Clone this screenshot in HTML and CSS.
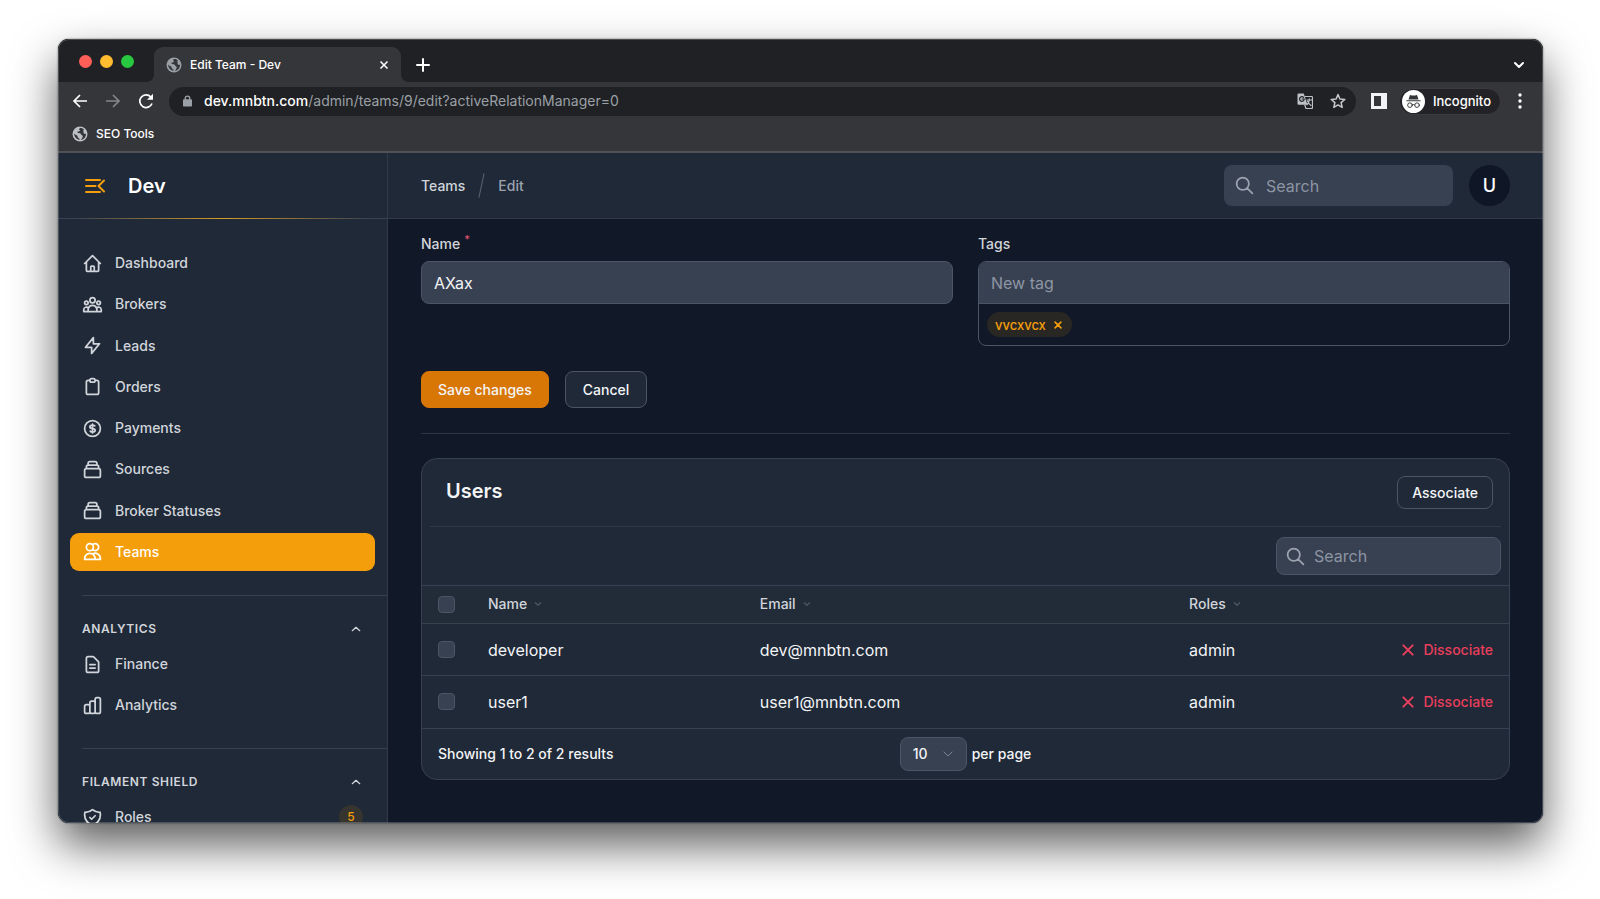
FILE: index.html
```html
<!DOCTYPE html>
<html lang="en">
<head>
<meta charset="utf-8">
<title>Edit Team - Dev</title>
<link rel="stylesheet" href="styles.css">
</head>
<body>
<svg class="defs" aria-hidden="true">
  <symbol id="i-home" viewBox="0 0 24 24"><path d="M3 12l2-2m0 0l7-7 7 7M5 10v10a1 1 0 001 1h3m10-11l2 2m-2-2v10a1 1 0 01-1 1h-3m-6 0a1 1 0 001-1v-4a1 1 0 011-1h2a1 1 0 011 1v4a1 1 0 001 1m-6 0h6"/></symbol>
  <symbol id="i-group" viewBox="0 0 24 24"><path d="M17 20h5v-2a3 3 0 00-5.356-1.857M17 20H7m10 0v-2c0-.656-.126-1.283-.356-1.857M7 20H2v-2a3 3 0 015.356-1.857M7 20v-2c0-.656.126-1.283.356-1.857m0 0a5.002 5.002 0 019.288 0M15 7a3 3 0 11-6 0 3 3 0 016 0zm6 3a2 2 0 11-4 0 2 2 0 014 0zM7 10a2 2 0 11-4 0 2 2 0 014 0z"/></symbol>
  <symbol id="i-bolt" viewBox="0 0 24 24"><path d="M13 10V3L4 14h7v7l9-11h-7z"/></symbol>
  <symbol id="i-clipboard" viewBox="0 0 24 24"><path d="M9 5H7a2 2 0 00-2 2v12a2 2 0 002 2h10a2 2 0 002-2V7a2 2 0 00-2-2h-2M9 5a2 2 0 002 2h2a2 2 0 002-2M9 5a2 2 0 012-2h2a2 2 0 012 2"/></symbol>
  <symbol id="i-dollar" viewBox="0 0 24 24"><path d="M12 8c-1.657 0-3 .895-3 2s1.343 2 3 2 3 .895 3 2-1.343 2-3 2m0-8c1.11 0 2.08.402 2.599 1M12 8V7m0 1v8m0 0v1m0-1c-1.11 0-2.08-.402-2.599-1M21 12a9 9 0 11-18 0 9 9 0 0118 0z"/></symbol>
  <symbol id="i-collection" viewBox="0 0 24 24"><path d="M19 11H5m14 0a2 2 0 012 2v6a2 2 0 01-2 2H5a2 2 0 01-2-2v-6a2 2 0 012-2m14 0V9a2 2 0 00-2-2M5 11V9a2 2 0 012-2m0 0V5a2 2 0 012-2h6a2 2 0 012 2v2M7 7h10"/></symbol>
  <symbol id="i-users" viewBox="0 0 24 24"><path d="M12 4.354a4 4 0 110 5.292M15 21H3v-1a6 6 0 0112 0v1zm0 0h6v-1a6 6 0 00-9-5.197M13 7a4 4 0 11-8 0 4 4 0 018 0z"/></symbol>
  <symbol id="i-document" viewBox="0 0 24 24"><path d="M9 12h6m-6 4h6m2 5H7a2 2 0 01-2-2V5a2 2 0 012-2h5.586a1 1 0 01.707.293l5.414 5.414a1 1 0 01.293.707V19a2 2 0 01-2 2z"/></symbol>
  <symbol id="i-chart" viewBox="0 0 24 24"><path d="M9 19v-6a2 2 0 00-2-2H5a2 2 0 00-2 2v6a2 2 0 002 2h2a2 2 0 002-2zm0 0V9a2 2 0 012-2h2a2 2 0 012 2v10m-6 0a2 2 0 002 2h2a2 2 0 002-2m0 0V5a2 2 0 012-2h2a2 2 0 012 2v14a2 2 0 01-2 2h-2a2 2 0 01-2-2z"/></symbol>
  <symbol id="i-shield" viewBox="0 0 24 24"><path d="M9 12l2 2 4-4m5.618-4.016A11.955 11.955 0 0112 2.944a11.955 11.955 0 01-8.618 3.04A12.02 12.02 0 003 9c0 5.591 3.824 10.29 9 11.622 5.176-1.332 9-6.03 9-11.622 0-1.042-.133-2.052-.382-3.016z"/></symbol>
  <symbol id="i-search" viewBox="0 0 24 24"><path d="M21 21l-6-6m2-5a7 7 0 11-14 0 7 7 0 0114 0z"/></symbol>
  <symbol id="i-x" viewBox="0 0 24 24"><path d="M5 5l14 14M19 5L5 19"/></symbol>
  <symbol id="i-up" viewBox="0 0 24 24"><path d="M3 16l9-8 9 8"/></symbol>
  <symbol id="i-down" viewBox="0 0 24 24"><path d="M4 8l8 8 8-8"/></symbol>
  <symbol id="i-globe" viewBox="0 0 16 16"><circle class="globe-disc" cx="8" cy="8" r="7.5"/><path class="globe-land" d="M8.600 1.900C7 2.200 6.800 3.300 7.600 3.900C8.600 4.600 7.200 5.600 6 5.500C5 5.400 5.200 6.700 6 6.900C7.500 7.200 8.600 7 9 8.200C9.300 9.200 10.600 9 10.700 10.200C10.800 11.300 9.800 12.800 9 13.900C12 13.500 14.100 10.900 14 8C13.400 7.400 12.400 8.200 11.800 7.400C11.200 6.500 11.900 6 11.400 5.100C11 4.300 11.800 3.700 12 3.500C11.200 2.600 9.900 1.900 8.600 1.900ZM2.100 7.600C2.200 10.900 4.500 13.500 7.400 13.900C7.800 12.800 7.400 12.200 6.400 11.900C5.300 11.500 6 10.200 5 9.500C4.100 8.900 3 8.700 2.100 7.600Z"/></symbol>
</svg>

<div class="window">
  <header class="chrome">
    <div class="tabstrip">
      <div class="lights"><span class="light red"></span><span class="light yellow"></span><span class="light green"></span></div>
      <div class="tab">
        <svg class="favicon"><use href="#i-globe"/></svg>
        <span class="tab-title">Edit Team - Dev</span>
        <button class="chrome-btn" aria-label="Close tab"><svg class="tab-close line"><use href="#i-x"/></svg></button>
      </div>
      <button class="chrome-btn new-tab" aria-label="New tab"><svg class="ico14 line" viewBox="0 0 14 14"><path d="M7 1v12M1 7h12"/></svg></button>
      <button class="chrome-btn tab-list" aria-label="Search tabs"><svg class="ico12 line thick"><use href="#i-down"/></svg></button>
    </div>
    <div class="toolbar">
      <button class="chrome-btn" aria-label="Back"><svg class="ico16 line" viewBox="0 0 16 16"><path d="M15 8H2M8 2L2 8l6 6"/></svg></button>
      <button class="chrome-btn forward" aria-label="Forward"><svg class="ico16 line" viewBox="0 0 16 16"><path d="M1 8h13M8 2l6 6-6 6"/></svg></button>
      <button class="chrome-btn" aria-label="Reload"><svg class="ico16 line" viewBox="0 0 16 16"><path d="M14 10.500A6.300 6.300 0 1 1 12.800 4"/><path class="solid" d="M15 .8v6H9z"/></svg></button>
      <div class="omnibox">
        <svg class="lock" viewBox="0 0 10 12"><rect class="fill" x="0" y="4" width="10" height="8" rx="1"/><path class="lock-arc" d="M2.500 5V3a2.500 2.500 0 0 1 5 0v2"/></svg>
        <span class="url"><b>dev.mnbtn.com</b>/admin/teams/9/edit?activeRelationManager=0</span>
        <svg class="ico16 translate" viewBox="0 0 16 16"><path class="fill" d="M1.500.5h5.300l3.600 11.200H1.500a1 1 0 0 1-1-1V1.500a1 1 0 0 1 1-1z"/><path class="edge" d="M8 3.500h6.500a1 1 0 0 1 1 1v10a1 1 0 0 1-1 1H9L7.800 12M10 7h4.800M12.300 5.800V7c-.1 2-1.200 3.600-2.400 4.700M10.600 8.400c.6 1.500 1.900 3 3.400 4"/><path class="cut" d="M7.300 6H5.200M6.600 4.400a2.300 2.300 0 1 0 .6 1.800"/></svg>
        <svg class="ico16 star" viewBox="0 0 16 16"><path d="M8 1.500l1.900 4.500 4.900.4-3.700 3.200 1.100 4.800L8 11.900l-4.200 2.500 1.100-4.800L1.200 6.400l4.900-.4z"/></svg>
      </div>
      <button class="chrome-btn" aria-label="Side panel"><svg class="ico16" viewBox="0 0 16 16"><path class="panel" fill-rule="evenodd" d="M0 0h16v16H0zM3 3v10h7V3z"/></svg></button>
      <button class="profile">
        <svg class="incognito" viewBox="0 0 24 24"><circle class="inc-disc" cx="12" cy="12" r="12"/><path class="inc-hat" d="M8.300 5.200l2 .5h3.400l2-.5 1.500 4.600H6.800zM4.600 10.600h14.800v1.200H4.600z"/><g class="inc-line"><circle cx="8.300" cy="15.800" r="2.400"/><circle cx="15.700" cy="15.800" r="2.400"/><path d="M10.700 15.500q1.300-.8 2.600 0"/></g></svg>
        Incognito
      </button>
      <button class="chrome-btn" aria-label="Menu"><svg class="kebab" viewBox="0 0 4 16"><circle cx="2" cy="2" r="1.700"/><circle cx="2" cy="8" r="1.700"/><circle cx="2" cy="14" r="1.700"/></svg></button>
    </div>
    <div class="bookmarks"><a href="#"><svg class="favicon"><use href="#i-globe"/></svg>SEO Tools</a></div>
  </header>

  <div class="app">
    <aside class="sidebar">
      <div class="brand">
        <button class="collapse" aria-label="Collapse sidebar"><svg viewBox="0 0 20 16"><path d="M1 2h14M1 8h9.500M1 14h14M19 2.500L13.500 8l5.500 5.500"/></svg></button>
        <a href="#">Dev</a>
      </div>
      <nav class="nav">
        <ul class="nav-main">
          <li><a href="#"><svg class="ni"><use href="#i-home"/></svg>Dashboard</a></li>
          <li><a href="#"><svg class="ni"><use href="#i-group"/></svg>Brokers</a></li>
          <li><a href="#"><svg class="ni"><use href="#i-bolt"/></svg>Leads</a></li>
          <li><a href="#"><svg class="ni"><use href="#i-clipboard"/></svg>Orders</a></li>
          <li><a href="#"><svg class="ni"><use href="#i-dollar"/></svg>Payments</a></li>
          <li><a href="#"><svg class="ni"><use href="#i-collection"/></svg>Sources</a></li>
          <li><a href="#"><svg class="ni"><use href="#i-collection"/></svg>Broker Statuses</a></li>
          <li><a href="#" class="active" aria-current="page"><svg class="ni"><use href="#i-users"/></svg>Teams</a></li>
        </ul>
        <section class="nav-group">
          <button class="group-head">Analytics<svg><use href="#i-up"/></svg></button>
          <ul>
            <li><a href="#"><svg class="ni"><use href="#i-document"/></svg>Finance</a></li>
            <li><a href="#"><svg class="ni"><use href="#i-chart"/></svg>Analytics</a></li>
          </ul>
        </section>
        <section class="nav-group">
          <button class="group-head">Filament Shield<svg><use href="#i-up"/></svg></button>
          <ul>
            <li><a href="#"><svg class="ni"><use href="#i-shield"/></svg>Roles<span class="count">5</span></a></li>
          </ul>
        </section>
      </nav>
    </aside>

    <div class="page">
      <div class="topbar">
        <nav class="crumbs" aria-label="Breadcrumb"><a href="#">Teams</a><span class="slash"></span><span class="current">Edit</span></nav>
        <label class="search"><svg><use href="#i-search"/></svg><input type="search" placeholder="Search" aria-label="Global search"></label>
        <button class="avatar" aria-label="Account">U</button>
      </div>
      <main>
        <form class="form">
          <div class="fields">
            <div class="field">
              <label for="name">Name<sup>*</sup></label>
              <input id="name" class="text" type="text" value="AXax">
            </div>
            <div class="field">
              <label for="tags">Tags</label>
              <div class="tags">
                <input id="tags" type="text" placeholder="New tag">
                <div class="tag-list"><button type="button" class="tag">vvcxvcx<svg><use href="#i-x"/></svg></button></div>
              </div>
            </div>
          </div>
          <div class="actions">
            <button type="button" class="btn primary">Save changes</button>
            <button type="button" class="btn">Cancel</button>
          </div>
        </form>
        <section class="card">
          <div class="card-head"><h2>Users</h2><button class="btn small">Associate</button></div>
          <div class="filters"><label class="search bordered"><svg><use href="#i-search"/></svg><input type="search" placeholder="Search" aria-label="Search users"></label></div>
          <table>
            <colgroup><col class="c-check"><col class="c-name"><col class="c-email"><col class="c-roles"><col class="c-act"></colgroup>
            <thead>
              <tr>
                <th><input type="checkbox" aria-label="Select all"></th>
                <th><button>Name<svg><use href="#i-down"/></svg></button></th>
                <th><button>Email<svg><use href="#i-down"/></svg></button></th>
                <th><button>Roles<svg><use href="#i-down"/></svg></button></th>
                <th></th>
              </tr>
            </thead>
            <tbody>
              <tr><td><input type="checkbox" aria-label="Select developer"></td><td>developer</td><td>dev@mnbtn.com</td><td>admin</td><td class="act"><button class="danger"><svg><use href="#i-x"/></svg>Dissociate</button></td></tr>
              <tr><td><input type="checkbox" aria-label="Select user1"></td><td>user1</td><td>user1@mnbtn.com</td><td>admin</td><td class="act"><button class="danger"><svg><use href="#i-x"/></svg>Dissociate</button></td></tr>
            </tbody>
          </table>
          <div class="card-foot">
            <span>Showing 1 to 2 of 2 results</span>
            <label class="per-page"><span class="select"><select><option>10</option><option>25</option><option>50</option></select><svg><use href="#i-down"/></svg></span>per page</label>
            <span></span>
          </div>
        </section>
      </main>
    </div>
  </div>
</div>
</body>
</html>
```

FILE: styles.css
```css
* { box-sizing: border-box; }

body {
  margin: 0;
  height: 100vh;
  padding: 39px 57px 76px 58px;
  display: flex;
  background: #fff;
  color: #fff;
  font: 500 14px/20px Inter, "Liberation Sans", sans-serif;
  overflow: hidden;
}

a { color: inherit; text-decoration: none; }
button, input, select { font: inherit; color: inherit; margin: 0; }
button { border: 0; padding: 0; background: none; cursor: pointer; }
ul { list-style: none; margin: 0; padding: 0; }
svg { display: block; flex: none; fill: none; stroke: currentColor; stroke-width: 2; stroke-linecap: round; stroke-linejoin: round; }
.defs { position: absolute; width: 0; height: 0; }

.window {
  flex: 1;
  min-width: 0;
  display: flex;
  flex-direction: column;
  position: relative;
  overflow: hidden;
  border-radius: 11px;
  background: #111827;
  box-shadow: 0 22px 46px rgba(0, 0, 0, .64), 0 0 2px rgba(0, 0, 0, .6);
}
.window::after {
  content: "";
  position: absolute;
  inset: 0;
  border: 1px solid rgba(255, 255, 255, .2);
  border-radius: 11px;
  pointer-events: none;
}

/* Browser chrome */
.chrome { background: #35363a; border-bottom: 2px solid #505154; font-size: 13px; }
.chrome-btn { display: flex; align-items: center; justify-content: center; }
.ico12 { width: 12px; height: 12px; }
.ico14 { width: 14px; height: 14px; }
.ico16 { width: 16px; height: 16px; }
.thick { stroke-width: 4; }
.solid, .fill { fill: currentColor; stroke: none; }

.tabstrip { display: flex; align-items: stretch; height: 43px; padding: 8px 18px 0 21px; background: #202124; }
.lights { display: flex; align-items: center; gap: 8px; padding-bottom: 7px; }
.light { width: 13px; height: 13px; border-radius: 50%; }
.red { background: #ff5f57; }
.yellow { background: #febc2e; }
.green { background: #28c840; }
.tab {
  position: relative;
  display: flex;
  align-items: center;
  gap: 8px;
  width: 247px;
  margin-left: 20px;
  padding: 0 11px 0 12px;
  background: #35363a;
  border-radius: 9px 9px 0 0;
  font-size: 12px;
}
.tab::before, .tab::after { content: ""; position: absolute; bottom: 0; width: 8px; height: 8px; }
.tab::before { left: -8px; background: radial-gradient(circle at 0 0, #202124 8px, #35363a 8px); }
.tab::after { right: -8px; background: radial-gradient(circle at 100% 0, #202124 8px, #35363a 8px); }
.favicon { width: 16px; height: 16px; color: #bdc1c6; }
.tab .favicon { color: #9aa0a6; }
.globe-disc { fill: currentColor; stroke: none; }
.globe-land { fill: #35363a; stroke: none; }
.tab-title { flex: 1; }
.tab-close { width: 12px; height: 12px; stroke-width: 3; stroke-linecap: butt; }
.new-tab { margin-left: 15px; }
.tab-list { margin-left: auto; }

.toolbar { display: flex; align-items: center; gap: 17px; height: 38px; padding: 0 21px 0 14px; }
.toolbar .line { stroke-linecap: butt; stroke-linejoin: miter; stroke-width: 1.700; }
.forward { color: #85868a; }
.omnibox { flex: 1; display: flex; align-items: center; gap: 17px; height: 29px; margin: 0 -2px; padding: 0 10px 0 14px; border-radius: 15px; background: #202124; font-size: 14px; font-weight: 400; }
.lock { width: 9px; height: 12px; margin-right: -5px; color: #9aa0a6; }
.lock-arc { stroke-width: 1.500; }
.url { flex: 1; color: #9aa0a6; }
.url b { color: #fff; font-weight: 500; }
.translate { color: #bdc1c6; }
.edge { stroke-width: 1.200; }
.cut { stroke: #202124; stroke-width: 1.200; }
.star { stroke-width: 1.500; color: #c4c7cb; }
.panel { fill: #f1f3f4; stroke: none; }
.profile { display: flex; align-items: center; gap: 8px; height: 27px; margin-left: -5px; padding: 0 9px 0 2px; border: 1px solid #3b3b40; border-radius: 14px; background: #232327; }
.incognito { width: 23px; height: 23px; }
.inc-disc { fill: #fff; stroke: none; }
.inc-hat { fill: #35363a; stroke: none; }
.inc-line { stroke: #35363a; stroke-width: 1; }
.kebab { width: 4px; height: 16px; fill: #fff; stroke: none; }

.bookmarks { display: flex; align-items: center; height: 31px; padding: 0 14px 4px; font-size: 12px; }
.bookmarks a { display: flex; align-items: center; gap: 8px; }

/* App shell */
.app { flex: 1; min-height: 0; display: flex; }
.sidebar { width: 330px; flex: none; overflow: hidden; background: #1f2937; border-right: 1px solid #303a48; color: #d1d5db; }
.brand {
  display: flex;
  align-items: center;
  gap: 23px;
  height: 66px;
  padding: 0 27px;
  color: #fff;
  font-size: 20px;
  font-weight: 600;
  border-bottom: 1px solid;
  border-image: linear-gradient(90deg, #374151 5%, #d79a26 50%, #374151 95%) 1;
}
.collapse svg { width: 20px; height: 16px; color: #f59e0b; }
.nav { padding: 25px 12px 0; }
.nav ul { display: grid; gap: 3px; }
.nav .nav-main { min-height: 327px; align-content: space-between; }
.nav li a { display: flex; align-items: center; gap: 12px; height: 38px; padding: 0 12px; border-radius: 9px; }
.nav li .active { background: #f59e0b; color: #fff; }
.ni { width: 21px; height: 21px; }
.nav-group { margin: 24px -12px 0 12px; border-top: 1px solid #374151; padding: 23px 12px 0 0; }
.nav-group ul { margin: 6px 0 0 -12px; }
.group-head { display: flex; align-items: center; justify-content: space-between; width: 100%; padding-right: 14px; font-size: 12px; font-weight: 600; text-transform: uppercase; letter-spacing: .05em; }
.group-head svg { width: 10px; height: 10px; stroke-width: 3; }
.count { margin-left: auto; min-width: 24px; padding: 2px 6px; border-radius: 12px; background: #35342f; color: #f59e0b; font-size: 12px; text-align: center; }

.page { flex: 1; min-width: 0; display: flex; flex-direction: column; }
.topbar { display: flex; align-items: center; gap: 16px; height: 66px; padding: 0 33px; background: #1f2937; border-bottom: 1px solid #303a48; }
.crumbs { display: flex; align-items: center; gap: 16px; margin-right: auto; color: #d1d5db; }
.slash { width: 1px; height: 25px; background: #5b6574; transform: rotate(12deg); }
.current { color: #9ca3af; }
.search { display: flex; align-items: center; gap: 11px; width: 229px; height: 41px; padding: 0 10px; border-radius: 8px; background: #384152; color: #9ca3af; font-size: 16px; font-weight: 400; }
.search svg { width: 21px; height: 21px; }
.search input { flex: 1; min-width: 0; padding: 0; border: 0; background: none; outline: 0; }
::placeholder { color: #8d95a3; opacity: 1; }
.avatar { width: 41px; height: 41px; border-radius: 50%; background: #0f1626; font-size: 18px; }

main { padding: 15px 33px; color: #f3f4f6; }
.fields { display: grid; grid-template-columns: 1fr 1fr; gap: 25px; }
.field > label { display: block; margin-bottom: 7px; color: #d1d5db; }
sup { margin-left: 4px; color: #e0526b; font-size: 11px; line-height: 0; }
.text, .tags { width: 100%; border: 1px solid #4b5563; border-radius: 8px; }
.text, .tags input { display: block; height: 43px; padding: 0 12px; background: #384152; font-size: 16px; font-weight: 400; outline: 0; }
.tags { overflow: hidden; }
.tags input { width: 100%; height: 42px; border: 0; border-bottom: 1px solid #4b5563; }
.tag-list { padding: 8px; }
.tag { display: flex; align-items: center; gap: 7px; height: 25px; padding: 0 9px 0 8px; border-radius: 13px; background: #292724; color: #f59e0b; font-size: 13px; }
.tag svg { width: 10px; height: 10px; stroke-width: 4; }
.actions { display: flex; gap: 16px; margin-top: 25px; padding-bottom: 25px; border-bottom: 1px solid #2b3544; }
.btn { height: 37px; padding: 0 17px; border: 1px solid #4b5563; border-radius: 8px; background: #1f2937; }
.primary { padding: 0 16px; border-color: #d97706; background: #d97706; }
.small { height: 33px; padding: 0 14px; }

.card { margin-top: 24px; border: 1px solid #374151; border-radius: 16px; background: #1f2937; overflow: hidden; }
.card-head { display: flex; align-items: flex-start; justify-content: space-between; margin: 0 8px; padding: 17px 8px 17px 16px; border-bottom: 1px solid #2f3a48; }
h2 { margin: 0; font-size: 20px; line-height: 30px; font-weight: 600; }
.filters { display: flex; justify-content: flex-end; padding: 10px 8px; }
.bordered { width: 225px; height: 38px; border: 1px solid #4b5563; padding: 0 8px; gap: 8px; }

table { width: 100%; table-layout: fixed; border-collapse: collapse; }
.c-check { width: 50px; }
.c-name { width: 25%; }
.c-email { width: 39.500%; }
.c-roles { width: 15%; }
th, td { padding: 0 16px; text-align: left; border-top: 1px solid #374151; }
thead { background: #222c38; color: #d1d5db; }
th { height: 38px; padding-bottom: 1px; font-weight: 500; }
th button { display: flex; align-items: center; gap: 7px; }
th svg { width: 8px; height: 8px; color: #4b5563; stroke-width: 4; }
td { height: 52px; font-size: 16px; font-weight: 400; }
td:not(:first-child, .act) { padding-left: 16px; }
input[type="checkbox"] { display: block; appearance: none; width: 17px; height: 17px; border: 1px solid #4b5563; border-radius: 4px; background: #384152; }
.danger { display: flex; align-items: center; gap: 7px; margin-left: auto; color: #e83e5c; font-size: 14px; font-weight: 500; }
.danger svg { width: 16px; height: 16px; stroke-width: 3; }

.card-foot { display: grid; grid-template-columns: 1fr auto 1fr; align-items: center; padding: 8px 16px; border-top: 1px solid #374151; }
.per-page { display: flex; align-items: center; gap: 5px; }
.select { display: grid; align-items: center; }
.select select { grid-area: 1 / 1; appearance: none; width: 67px; height: 34px; padding: 0 12px; border: 1px solid #4b5563; border-radius: 8px; background: #384152; }
.select svg { grid-area: 1 / 1; justify-self: end; width: 12px; height: 12px; margin-right: 13px; color: #7a8493; pointer-events: none; }
```
